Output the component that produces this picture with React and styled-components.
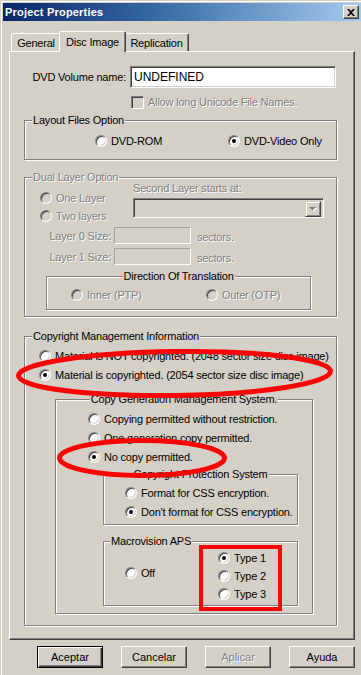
import React from "react";
import styled, { createGlobalStyle, css } from "styled-components";

const GlobalStyle = createGlobalStyle`
  html, body { margin: 0; padding: 0; background: #d4d0c8; }
  body { font-family: "Liberation Sans", Arial, sans-serif; font-size: 11px; color: #000; letter-spacing: -0.2px; }
  * { box-sizing: border-box; }
`;

const Window = styled.div`
  position: relative;
  width: 361px;
  height: 675px;
  overflow: hidden;
  background: #d4d0c8;
  padding: 3px 0 0 3px;
  box-shadow: inset 1px 1px #d4d0c8, inset 2px 2px #ffffff;
`;

const TitleBar = styled.div`
  height: 18px;
  display: flex;
  align-items: center;
  justify-content: space-between;
  padding: 0 2px 0 2px;
  background: linear-gradient(90deg, #0a246a 0%, #3a6ea5 45%, #a6caf0 100%);
  color: #fff;
  font-weight: bold;
  font-size: 11px;
  letter-spacing: 0.2px;
`;

const TitleText = styled.span`
  line-height: 18px;
`;

const CloseBtn = styled.span`
  width: 16px;
  height: 14px;
  display: flex;
  align-items: center;
  justify-content: center;
  background: #d4d0c8;
  border: 1px solid;
  border-color: #fff #404040 #404040 #fff;
  box-shadow: inset -1px -1px #808080;
`;

const Body = styled.div`
  padding: 0 6px 0 9px;
  margin-left: -3px;
`;

const TabRow = styled.div`
  margin-top: 10px;
  height: 20px;
  display: flex;
  align-items: flex-end;
  padding-left: 2px;
`;

const Tab = styled.div`
  position: relative;
  height: 18px;
  width: ${(p) => p.$w}px;
  border: 1px solid;
  border-bottom: none;
  border-color: #fff #404040 transparent #fff;
  border-radius: 2px 2px 0 0;
  box-shadow: inset -1px 0 #808080;
  background: #d4d0c8;
  display: flex;
  align-items: center;
  justify-content: center;
  padding-top: 1px;
  ${(p) =>
    p.$active &&
    css`
      height: 21px;
      margin: 0 -2px -1px -2px;
      z-index: 2;
      padding-bottom: 2px;
    `}
`;

const Panel = styled.div`
  height: 589px;
  border: 1px solid;
  border-color: #fff #404040 #404040 #fff;
  box-shadow: inset -1px -1px #808080;
  padding: 14px 17px 0 14px;
  display: flex;
  flex-direction: column;
`;

const FieldRow = styled.div`
  display: flex;
  align-items: ${(p) => p.$align || "center"};
  gap: ${(p) => p.$gap ?? 4}px;
  margin-top: ${(p) => p.$mt ?? 0}px;
  margin-left: ${(p) => p.$ml ?? 0}px;
`;

const disabledText = css`
  color: #808080;
  text-shadow: 1px 1px 0 #fff;
`;

const Label = styled.span`
  width: ${(p) => p.$w}px;
  text-align: right;
  flex: none;
  white-space: nowrap;
  ${(p) => p.$disabled && disabledText}
`;

const Text = styled.span`
  white-space: nowrap;
  line-height: 13px;
  padding-top: ${(p) => p.$pt ?? 0}px;
  margin-left: ${(p) => p.$ml ?? 0}px;
  ${(p) => p.$disabled && disabledText}
`;

const sunken = css`
  border: 1px solid;
  border-color: #808080 #fff #fff #808080;
  box-shadow: inset 1px 1px #404040, inset -1px -1px #d4d0c8;
`;

const TextInput = styled.div`
  ${sunken}
  width: ${(p) => p.$w}px;
  height: ${(p) => p.$h}px;
  background: ${(p) => (p.$disabled ? "#d4d0c8" : "#fff")};
  display: flex;
  align-items: center;
  padding-left: 3px;
  font-size: 12px;
  letter-spacing: 0;
  flex: none;
  ${(p) =>
    p.$disabled &&
    css`
      border-color: #a0a0a0 #fff #fff #a0a0a0;
      box-shadow: none;
    `}
`;

const Check = styled.span`
  ${sunken}
  width: 13px;
  height: 13px;
  flex: none;
  background: #d4d0c8;
`;

const RadioDot = styled.span`
  position: relative;
  flex: none;
  width: 12px;
  height: 12px;
  border-radius: 50%;
  border: 1px solid;
  border-color: #808080 #fff #fff #808080;
  box-shadow: inset 1px 1px #404040, inset -1px -1px #d4d0c8;
  background: ${(p) => (p.$disabled ? "#d4d0c8" : "#fff")};
  &::after {
    content: "";
    display: ${(p) => (p.$checked ? "block" : "none")};
    position: absolute;
    left: 3px;
    top: 3px;
    width: 4px;
    height: 4px;
    border-radius: 50%;
    background: ${(p) => (p.$disabled ? "#808080" : "#000")};
  }
`;

const RadioRow = styled.div`
  display: flex;
  align-items: center;
  gap: 4px;
  height: 14px;
  width: ${(p) => (p.$w ? `${p.$w}px` : "auto")};
  flex: none;
`;

const Radio = ({ label, checked, disabled, w }) => (
  <RadioRow $w={w}>
    <RadioDot $checked={checked} $disabled={disabled} />
    <Text $disabled={disabled}>{label}</Text>
  </RadioRow>
);

const Group = styled.div`
  position: relative;
  flex: none;
  height: ${(p) => p.$h}px;
  width: ${(p) => (p.$w ? `${p.$w}px` : "auto")};
  margin-top: ${(p) => p.$mt ?? 0}px;
  margin-left: ${(p) => p.$ml ?? 0}px;
  border: 1px solid #808080;
  box-shadow: inset 1px 1px #fff, 1px 1px #fff;
  padding: ${(p) => p.$pad || "0"};
  display: flex;
  flex-direction: ${(p) => p.$dir || "column"};
  gap: ${(p) => p.$gap ?? 0}px;
`;

const Legend = styled.span`
  position: absolute;
  top: -7px;
  line-height: 13px;
  background: #d4d0c8;
  padding: 0 1px;
  white-space: nowrap;
  ${(p) =>
    p.$center
      ? css`
          left: 50%;
          transform: translateX(-50%);
        `
      : css`
          left: ${p.$left ?? 7}px;
        `}
  ${(p) => p.$disabled && disabledText}
`;

const Column = styled.div`
  display: flex;
  flex-direction: column;
  gap: ${(p) => p.$gap ?? 0}px;
  width: ${(p) => (p.$w ? `${p.$w}px` : "auto")};
  padding-top: ${(p) => p.$pt ?? 0}px;
  flex: none;
`;

const Select = styled.div`
  ${sunken}
  width: 191px;
  height: 20px;
  background: #d4d0c8;
  display: flex;
  justify-content: flex-end;
  padding: 2px;
`;

const DropBtn = styled.span`
  width: 16px;
  height: 16px;
  background: #d4d0c8;
  border: 1px solid;
  border-color: #d4d0c8 #404040 #404040 #d4d0c8;
  box-shadow: inset 1px 1px #fff, inset -1px -1px #808080;
  display: flex;
  align-items: center;
  justify-content: center;
`;

const ButtonRow = styled.div`
  margin-top: 6px;
  display: flex;
  justify-content: flex-end;
  gap: 18px;
`;

const Button = styled.div`
  width: 66px;
  height: 22px;
  display: flex;
  align-items: center;
  justify-content: center;
  background: #d4d0c8;
  letter-spacing: 0;
  border: 1px solid;
  border-color: #fff #404040 #404040 #fff;
  box-shadow: inset -1px -1px #808080;
  ${(p) =>
    p.$default &&
    css`
      border-color: #000;
      box-shadow: inset 1px 1px #fff, inset -1px -1px #404040, inset -2px -2px #808080;
    `}
  ${(p) => p.$disabled && disabledText}
`;

const Overlay = styled.svg`
  position: absolute;
  left: 0;
  top: 0;
  pointer-events: none;
`;

export default function App() {
  return (
    <>
      <GlobalStyle />
      <Window>
        <TitleBar>
          <TitleText>Project Properties</TitleText>
          <CloseBtn>
            <svg width="8" height="7" viewBox="0 0 8 7">
              <path d="M0 0h2l2 2 2-2h2L5 3.5 8 7H6L4 5 2 7H0l3-3.5z" fill="#000" />
            </svg>
          </CloseBtn>
        </TitleBar>
        <Body>
          <TabRow>
            <Tab $w={50}>General</Tab>
            <Tab $w={67} $active>Disc Image</Tab>
            <Tab $w={65}>Replication</Tab>
          </TabRow>
          <Panel>
            <FieldRow $gap={4}>
              <Label $w={102}>DVD Volume name:</Label>
              <TextInput $w={206} $h={22}>UNDEFINED</TextInput>
            </FieldRow>
            <FieldRow $mt={8} $ml={107} $gap={4}>
              <Check />
              <Text $disabled>Allow long Unicode File Names.</Text>
            </FieldRow>

            <Group $h={40} $mt={11} $dir="row" $pad="13px 0 0 70px">
              <Legend>Layout Files Option</Legend>
              <Radio w={133} label="DVD-ROM" />
              <Radio label="DVD-Video Only" checked />
            </Group>

            <Group $h={140} $mt={17} $pad="4px 0 0 0">
              <Legend $disabled>Dual Layer Option</Legend>
              <FieldRow $ml={15} $gap={0} $align="flex-start">
                <Column $w={93} $pt={9} $gap={4}>
                  <Radio label="One Layer" disabled />
                  <Radio label="Two layers" disabled />
                </Column>
                <Column $gap={3}>
                  <Text $disabled>Second Layer starts at:</Text>
                  <Select>
                    <DropBtn>
                      <svg width="8" height="5" viewBox="0 0 8 5">
                        <path d="M1 1h7L4.5 4.5z" fill="#fff" />
                        <path d="M0 0h7L3.5 3.5z" fill="#808080" />
                      </svg>
                    </DropBtn>
                  </Select>
                </Column>
              </FieldRow>
              <FieldRow $mt={4} $gap={3}>
                <Label $w={86} $disabled>Layer 0 Size:</Label>
                <TextInput $w={77} $h={17} $disabled />
                <Text $disabled $pt={3} $ml={3}>sectors.</Text>
              </FieldRow>
              <FieldRow $mt={4} $gap={3}>
                <Label $w={86} $disabled>Layer 1 Size:</Label>
                <TextInput $w={77} $h={17} $disabled />
                <Text $disabled $pt={3} $ml={3}>sectors.</Text>
              </FieldRow>
              <Group $h={34} $w={265} $mt={11} $ml={21} $dir="row" $pad="11px 0 0 24px">
                <Legend $center>Direction Of Translation</Legend>
                <Radio w={135} label="Inner (PTP)" disabled />
                <Radio label="Outer (OTP)" disabled />
              </Group>
            </Group>

            <Group $h={290} $mt={19} $pad="12px 0 0 14px">
              <Legend>Copyright Management Information</Legend>
              <Column $gap={5}>
                <Radio label="Material is NOT copyrighted. (2048 sector size disc image)" />
                <Radio label="Material is copyrighted. (2054 sector size disc image)" checked />
              </Column>
              <Group $h={215} $w={258} $mt={17} $ml={16} $pad="12px 0 0 32px">
                <Legend $center>Copy Generation Management System.</Legend>
                <Column $gap={5}>
                  <Radio label="Copying permitted without restriction." />
                  <Radio label="One generation copy permitted." />
                  <Radio label="No copy permitted." checked />
                </Column>
                <Group $h={51} $w={195} $mt={10} $ml={15} $pad="11px 0 0 21px">
                  <Legend $center>Copyright Protection System</Legend>
                  <Column $gap={5}>
                    <Radio label="Format for CSS encryption." />
                    <Radio label="Don't format for CSS encryption." checked />
                  </Column>
                </Group>
                <Group $h={65} $w={195} $mt={16} $ml={15} $dir="row" $pad="0 0 0 21px">
                  <Legend $left={6}>Macrovision APS</Legend>
                  <Column $w={93} $pt={24}>
                    <Radio label="Off" />
                  </Column>
                  <Column $pt={9} $gap={4}>
                    <Radio label="Type 1" checked />
                    <Radio label="Type 2" />
                    <Radio label="Type 3" />
                  </Column>
                </Group>
              </Group>
            </Group>
          </Panel>
          <ButtonRow>
            <Button $default>Aceptar</Button>
            <Button>Cancelar</Button>
            <Button $disabled>Aplicar</Button>
            <Button>Ayuda</Button>
          </ButtonRow>
        </Body>
        <Overlay width="361" height="675" viewBox="0 0 361 675">
          <ellipse cx="174.5" cy="373.5" rx="156" ry="22" fill="none" stroke="#ff0000" strokeWidth="5" transform="rotate(-0.8 174.5 373.5)" />
          <ellipse cx="142" cy="458" rx="82.5" ry="17.5" fill="none" stroke="#ff0000" strokeWidth="5" />
          <rect x="201" y="547" width="79" height="62" fill="none" stroke="#ff0000" strokeWidth="4" />
        </Overlay>
      </Window>
    </>
  );
}
